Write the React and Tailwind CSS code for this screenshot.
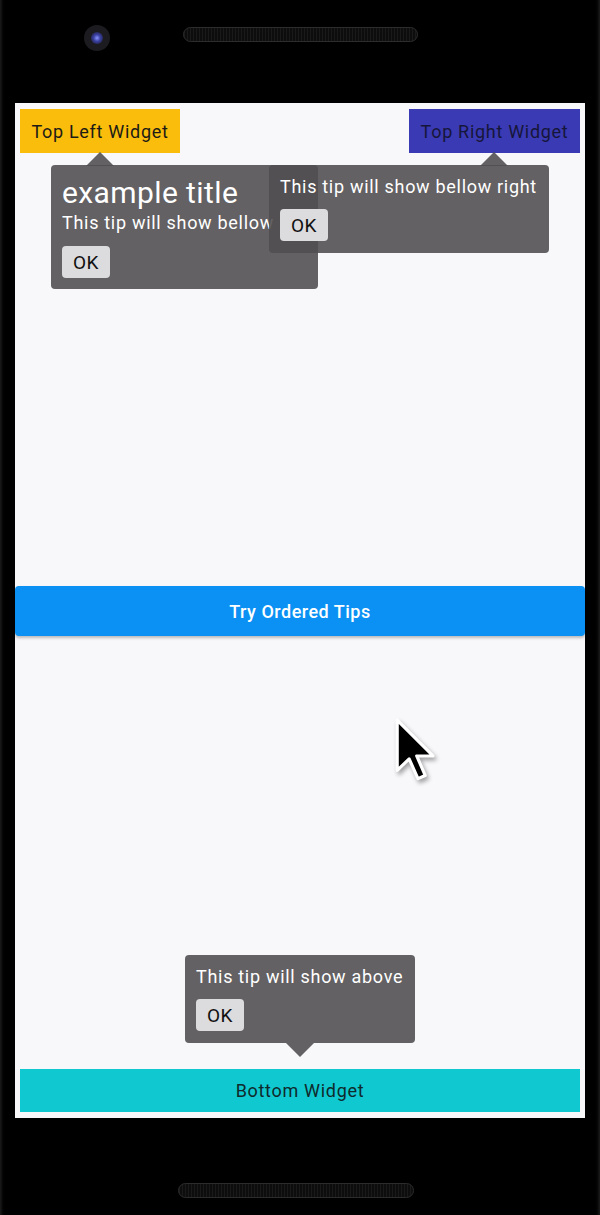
import React from 'react';

const font = { fontFamily: 'Roboto, "Noto Sans", sans-serif' };

const OkButton = () => (
  <button className="h-[32px] w-[48px] rounded-[4px] bg-[#dcdbde] text-[19px] font-normal tracking-[0.5px] text-[#111] leading-none">
    OK
  </button>
);

// little triangle on a tooltip, pointing up or down
const Arrow = ({ className, down }) => (
  <svg className={`absolute ${className}`} width="28" height="14" viewBox="0 0 28 14">
    {down ? (
      <path d="M0 0 L28 0 L14 14 Z" fill="rgba(80,79,80,0.89)" />
    ) : (
      <path d="M0 14 L28 14 L14 0 Z" fill="rgba(80,79,80,0.89)" />
    )}
  </svg>
);

const Cursor = () => (
  <svg
    className="absolute left-[392px] top-[717px] drop-shadow-[2px_3px_2px_rgba(0,0,0,0.35)]"
    width="45"
    height="66"
    viewBox="0 0 14 21"
  >
    <path
      d="M1.5 1 L1.5 17 L5.3 13.3 L8.1 19.6 L10.4 18.6 L7.7 12.4 L12.9 12.4 Z"
      fill="#000"
      stroke="#fff"
      strokeWidth="1"
      strokeLinejoin="round"
    />
  </svg>
);

const App = () => {
  return (
    <div className="relative flex h-[1215px] w-[600px] flex-col overflow-hidden bg-black" style={font}>
      {/* phone frame edges */}
      <div className="pointer-events-none absolute inset-y-0 left-0 w-[6px] bg-gradient-to-r from-[#1c1c1c] to-black" />
      <div className="pointer-events-none absolute inset-y-0 right-0 w-[6px] bg-gradient-to-l from-[#1c1c1c] to-black" />

      {/* top bezel */}
      <div className="relative h-[103px] shrink-0">
        <div className="absolute left-[84px] top-[25px] flex h-[26px] w-[26px] items-center justify-center rounded-full bg-[#1c1c20]">
          <div className="h-[12px] w-[12px] rounded-full bg-[radial-gradient(circle,#8a95ff_0%,#3a40a0_40%,#16161f_100%)]" />
        </div>
        <div className="absolute left-[183px] top-[27px] h-[15px] w-[235px] rounded-full border border-[#2c2c2c] bg-[#0d0d0d] bg-[repeating-linear-gradient(90deg,#1a1a1a_0px,#1a1a1a_1px,#0d0d0d_1px,#0d0d0d_3px)]" />
      </div>

      {/* screen */}
      <div className="relative mx-[15px] flex h-[1015px] shrink-0 flex-col bg-[#f8f7fa] px-[5px] py-[6px] tracking-[0.7px]">
        <div className="flex items-start justify-between">
          <div className="flex h-[44px] w-[160px] items-center justify-center bg-[#fbbd0b] text-[18px] text-[#1d1b16]">
            Top Left Widget
          </div>
          <div className="flex h-[44px] w-[171px] items-center justify-center bg-[#3a3ab4] text-[18px] text-[#16163a]">
            Top Right Widget
          </div>
        </div>

        <div className="flex-1" />
        <div className="-mx-[5px] flex h-[50px] items-center justify-center rounded-[4px] bg-[#0b91f3] text-[18px] font-medium tracking-[0.5px] text-white shadow-[0_2px_3px_rgba(0,0,0,0.25)]">
          Try Ordered Tips
        </div>
        <div className="flex-1" />

        <div className="flex h-[43px] items-center justify-center bg-[#10c8cf] text-[18px] text-[#0f2a2c]">
          Bottom Widget
        </div>

        {/* tooltip for top left */}
        <Arrow className="left-[71px] top-[49px]" />
        <div className="absolute left-[36px] top-[62px] flex h-[124px] w-[267px] flex-col items-start overflow-hidden rounded-[4px] bg-[rgba(80,79,80,0.89)] px-[11px] pt-[11px] text-white">
          <div className="text-[30px] leading-[34px] tracking-[0.4px]">example title</div>
          <div className="mt-[1px] whitespace-nowrap text-[18px] leading-[24px]">This tip will show bellow</div>
          <div className="mt-[11px]">
            <OkButton />
          </div>
        </div>

        {/* tooltip for top right */}
        <Arrow className="left-[465px] top-[49px]" />
        <div className="absolute left-[254px] top-[62px] flex h-[88px] w-[280px] flex-col items-start rounded-[4px] bg-[rgba(80,79,80,0.89)] px-[11px] pt-[10px] text-white">
          <div className="whitespace-nowrap text-[18px] leading-[24px]">This tip will show bellow right</div>
          <div className="mt-[10px]">
            <OkButton />
          </div>
        </div>

        {/* tooltip for bottom */}
        <div className="absolute left-[170px] top-[852px] flex h-[88px] w-[230px] flex-col items-start rounded-[4px] bg-[rgba(80,79,80,0.89)] px-[11px] pt-[10px] text-white">
          <div className="whitespace-nowrap text-[18px] leading-[24px]">This tip will show above</div>
          <div className="mt-[10px]">
            <OkButton />
          </div>
        </div>
        <Arrow down className="left-[271px] top-[940px]" />
      </div>

      {/* bottom bezel */}
      <div className="relative flex-1">
        <div className="absolute left-[178px] top-[65px] h-[15px] w-[236px] rounded-full border border-[#2c2c2c] bg-[#0d0d0d] bg-[repeating-linear-gradient(90deg,#1a1a1a_0px,#1a1a1a_1px,#0d0d0d_1px,#0d0d0d_3px)]" />
      </div>

      <Cursor />
    </div>
  );
};

export default App;
